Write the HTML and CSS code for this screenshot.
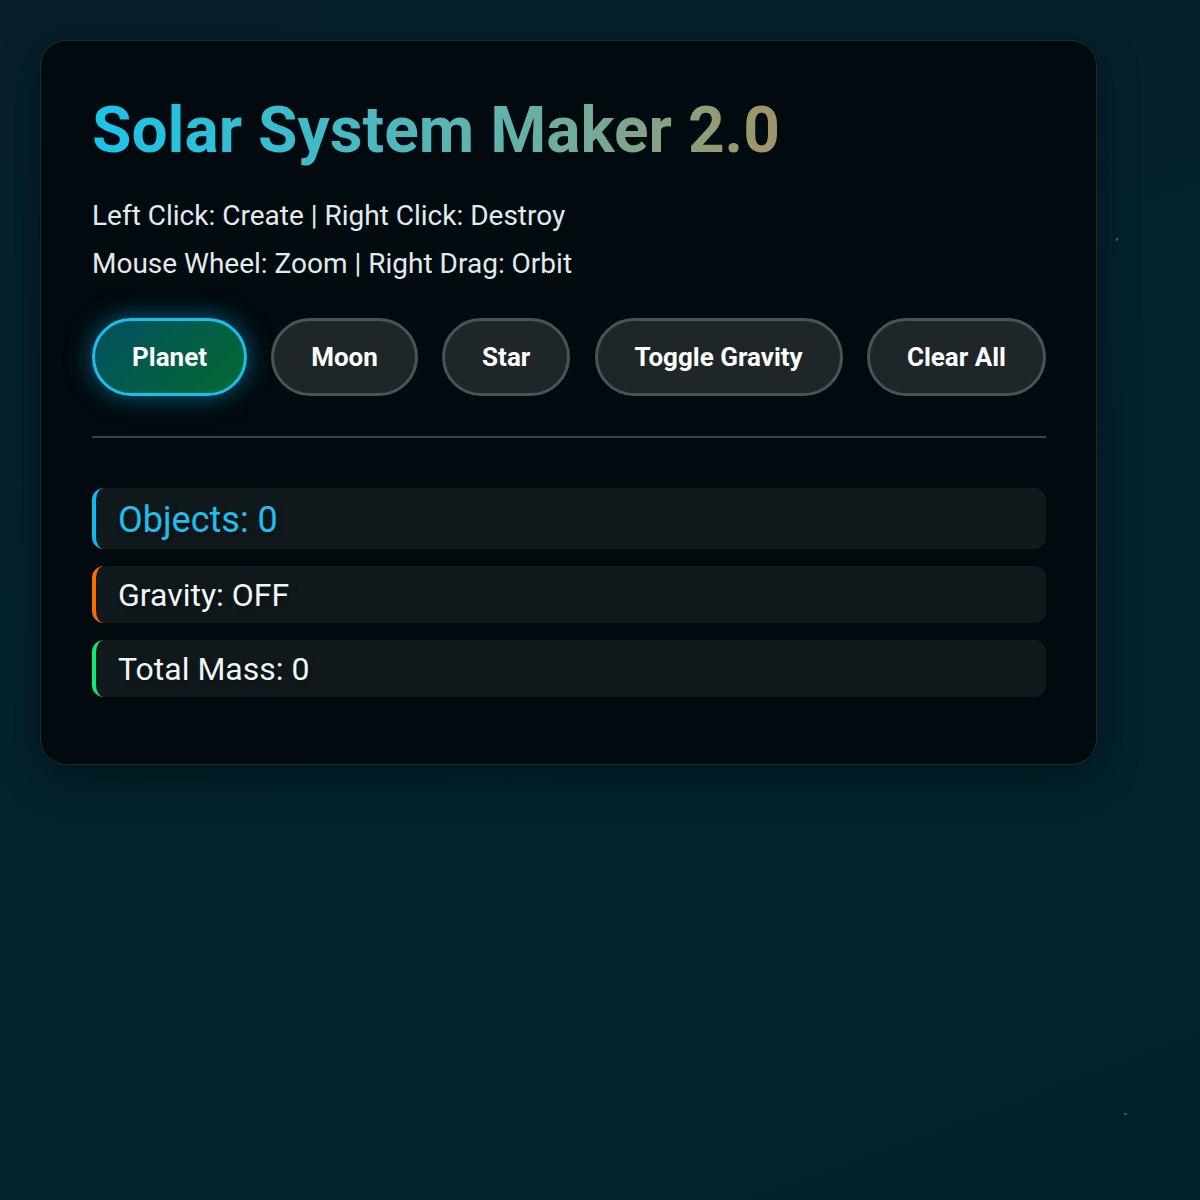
FILE: index.html
```html
<!DOCTYPE html>
<html lang="en">
<head>
<meta charset="utf-8">
<title>Solar System Maker 2.0</title>
<link rel="stylesheet" href="styles.css">
</head>
<body>
<span class="star star-a"></span>
<span class="star star-b"></span>
<main class="panel">
  <h1 class="title"><span class="title-text">Solar System Maker 2.0</span></h1>
  <p class="hint">Left Click: Create | Right Click: Destroy</p>
  <p class="hint">Mouse Wheel: Zoom | Right Drag: Orbit</p>
  <div class="toolbar">
    <button class="btn btn-active">Planet</button>
    <button class="btn">Moon</button>
    <button class="btn">Star</button>
    <button class="btn">Toggle Gravity</button>
    <button class="btn">Clear All</button>
  </div>
  <hr class="divider">
  <div class="stats">
    <div class="stat stat-objects">Objects: 0</div>
    <div class="stat stat-gravity">Gravity: OFF</div>
    <div class="stat stat-mass">Total Mass: 0</div>
  </div>
</main>
</body>
</html>
```
FILE: styles.css
```css
html, body {
  margin: 0;
  padding: 0;
}
body {
  min-height: 1200px;
  background: linear-gradient(160deg, #05202a 0%, #03222c 60%, #03212b 100%);
  font-family: Roboto, "Noto Sans", "Liberation Sans", sans-serif;
  padding: 40px;
  box-sizing: border-box;
  position: relative;
}
.star {
  position: absolute;
  width: 2px;
  height: 3px;
  background: #3f6470;
  border-radius: 1px;
}
.star-a { left: 1116px; top: 238px; }
.star-b { left: 1124px; top: 1113px; width: 3px; height: 2px; }

.panel {
  width: 954px;
  padding: 52px 50px 67px 51px;
  background: #010a0e;
  border: 1px solid #1f2b30;
  border-radius: 26px;
  box-shadow: 0 10px 40px rgba(0, 0, 0, 0.35);
}
.title {
  margin: 0 0 24px;
  font-size: 64px;
  font-weight: 700;
  line-height: normal;
}
.title-text {
  display: inline-block;
  background: linear-gradient(90deg, #19c4e8 0%, #63b2ab 60%, #a19466 100%);
  -webkit-background-clip: text;
  background-clip: text;
  color: transparent;
}
.hint {
  margin: 0;
  font-size: 28px;
  line-height: 48px;
  color: #e2eaee;
}
.toolbar {
  margin-top: 30px;
  display: flex;
  justify-content: space-between;
}
.btn {
  font-family: Roboto, "Noto Sans", "Liberation Sans", sans-serif;
  font-size: 26px;
  font-weight: 700;
  line-height: 30px;
  color: #ffffff;
  padding: 21px 37px;
  background: #1e2629;
  border: 3px solid #4a5357;
  border-radius: 40px;
}
.btn-active {
  background: linear-gradient(135deg, #024f62 0%, #046a30 100%);
  border-color: #18c0f0;
  box-shadow: 0 0 26px rgba(0, 185, 245, 0.5);
}
.divider {
  margin: 40px 0 50px;
  border: 0;
  height: 2px;
  background: #394347;
}
.stats {
  display: flex;
  flex-direction: column;
  gap: 17px;
}
.stat {
  background: #101a1d;
  border-radius: 12px;
  border-left: 4px solid #00b8ff;
  padding: 11px 22px 9px;
  font-size: 32px;
  line-height: 37px;
  color: #f2f5f6;
  text-shadow: 2px 2px 6px rgba(0, 0, 0, 0.6);
}
.stat-objects {
  font-size: 36px;
  line-height: 41px;
  padding-top: 12px;
  padding-bottom: 8px;
  color: #1cc0f0;
  border-left-color: #12b8f0;
}
.stat-gravity { border-left-color: #ff6a00; }
.stat-mass { border-left-color: #10e87a; }
```
